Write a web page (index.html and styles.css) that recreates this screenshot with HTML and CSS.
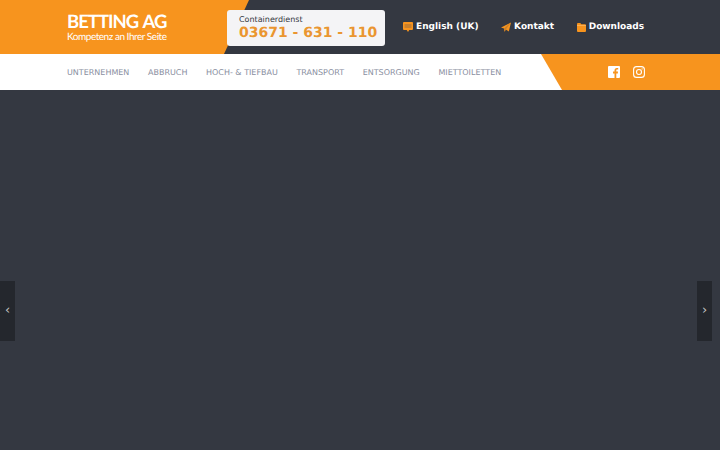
FILE: index.html
```html
<!DOCTYPE html>
<html>
<head>
	<meta charset="utf-8">
	<title>Betting AG</title>
	<link rel="stylesheet" href="styles.css">
</head>
<body>
	<div class="top">
		<div class="logo">
			<div class="logoName">BETTING AG</div>
			<div class="logoSub">Kompetenz an Ihrer Seite</div>
		</div>
		<div class="phone">
			<div class="phoneLabel">Containerdienst</div>
			<div class="phoneNum">03671 - 631 - 110</div>
		</div>
		<ul class="topLinks">
			<li>
				<svg width="10" height="10" viewBox="0 0 10 10"><path d="M1 0h8a1 1 0 0 1 1 1v6a1 1 0 0 1-1 1H6.300L5 10 3.700 8H1a1 1 0 0 1-1-1V1a1 1 0 0 1 1-1z" fill="#f7941e"/><path d="M1.500 2h7v4h-7z" fill="#c9802c"/></svg>
				English (UK)
			</li>
			<li>
				<svg width="10" height="10" viewBox="0 0 10 10"><path d="M10 .5 7.800 9.500 4.800 7.400 3.600 9.800 3 6.500 0 5.600z" fill="#f7941e"/><path d="M10 .5 3 6.500 3.600 9.800 4.800 7.400z" fill="#c9802c"/></svg>
				Kontakt
			</li>
			<li>
				<svg width="9" height="9" viewBox="0 0 9 9"><path d="M0 1a1 1 0 0 1 1-1h2.300l1 1.200H8a1 1 0 0 1 1 1V8a1 1 0 0 1-1 1H1a1 1 0 0 1-1-1z" fill="#f7941e"/><path d="M0 2.500h9" stroke="#fbc27a" stroke-width=".6"/></svg>
				Downloads
			</li>
		</ul>
	</div>
	<div class="nav">
		<ul class="navList">
			<li>UNTERNEHMEN</li>
			<li>ABBRUCH</li>
			<li>HOCH- &amp; TIEFBAU</li>
			<li>TRANSPORT</li>
			<li>ENTSORGUNG</li>
			<li>MIETTOILETTEN</li>
		</ul>
		<div class="social">
			<svg width="12" height="12" viewBox="0 0 12 12"><path d="M1 0h10a1 1 0 0 1 1 1v10a1 1 0 0 1-1 1H8.300V7.400h1.500l.2-1.800H8.300V4.500c0-.5.200-.9.900-.9h1V2c-.2 0-.8-.1-1.400-.1-1.400 0-2.300.9-2.300 2.400v1.300H5v1.800h1.500V12H1a1 1 0 0 1-1-1V1a1 1 0 0 1 1-1z" fill="#fff"/></svg>
			<svg width="12" height="12" viewBox="0 0 12 12" fill="none" stroke="#fff" stroke-width="1.100"><rect x=".6" y=".6" width="10.800" height="10.800" rx="3"/><circle cx="6" cy="6" r="2.500"/><circle cx="9.100" cy="2.900" r=".6" fill="#fff" stroke="none"/></svg>
		</div>
	</div>
	<div class="slider">
		<a class="arrow arrowLeft">&#8249;</a>
		<a class="arrow arrowRight">&#8250;</a>
	</div>
</body>
</html>
```

FILE: styles.css
```css
* {
	padding: 0;
	margin: 0;
	box-sizing: border-box;
}
html, body {
	height: 100%;
}
body {
	background: #343841;
	font-family: "DejaVu Sans", sans-serif;
	text-rendering: geometricPrecision;
	overflow: hidden;
	display: flex;
	flex-direction: column;
}
ul {
	list-style: none;
}
.top {
	height: 54px;
	padding-left: 67px;
	display: flex;
	align-items: center;
	position: relative;
}
/* orange corner behind the logo */
.top::before {
	content: "";
	position: absolute;
	left: 0;
	top: 0;
	width: 249px;
	height: 54px;
	background: #f7941e;
	clip-path: polygon(0 0, 100% 0, 224px 100%, 0 100%);
}
.logo {
	width: 160px;
	color: #fff;
	position: relative;
	font-family: Lato, sans-serif;
}
.logoName {
	font-size: 18.500px;
	font-weight: 700;
	letter-spacing: -1px;
	word-spacing: 1.500px;
	line-height: 19px;
}
.logoSub {
	font-size: 10px;
	letter-spacing: -.46px;
	line-height: 12px;
}
.phone {
	width: 158px;
	height: 36px;
	margin-top: 2px;
	padding: 5px 0 0 12px;
	background: #f4f4f6;
	border-radius: 3px;
	position: relative;
}
.phoneLabel {
	font-size: 8px;
	line-height: 10px;
	color: #343841;
}
.phoneNum {
	font-size: 14px;
	font-weight: 700;
	line-height: 16px;
	color: #ea9630;
	white-space: nowrap;
}
.topLinks {
	display: flex;
	margin-left: 18px;
	gap: 22.500px;
	color: #fff;
	font-size: 9px;
	font-weight: 700;
	position: relative;
}
.topLinks li {
	display: flex;
	align-items: center;
	gap: 3px;
}
.nav {
	height: 36px;
	background: #fff;
	padding-left: 67px;
	display: flex;
	align-items: center;
	position: relative;
}
/* orange wedge on the right */
.nav::before {
	content: "";
	position: absolute;
	right: 0;
	top: 0;
	width: 179px;
	height: 36px;
	background: #f7941e;
	clip-path: polygon(0 0, 100% 0, 100% 100%, 21px 100%);
}
.navList {
	display: flex;
	gap: 18.600px;
	font-size: 8px;
	color: #8a8f9f;
	white-space: nowrap;
}
.social {
	display: flex;
	gap: 13px;
	position: absolute;
	left: 608px;
	top: 12px;
}
.slider {
	flex: 1;
	position: relative;
}
.arrow {
	position: absolute;
	top: 191px;
	width: 15px;
	height: 60px;
	background: #24272d;
	color: #c8c8c8;
	font-size: 13px;
	line-height: 60px;
	text-align: center;
}
.arrowLeft {
	left: 0;
}
.arrowRight {
	left: 697px;
}
```
